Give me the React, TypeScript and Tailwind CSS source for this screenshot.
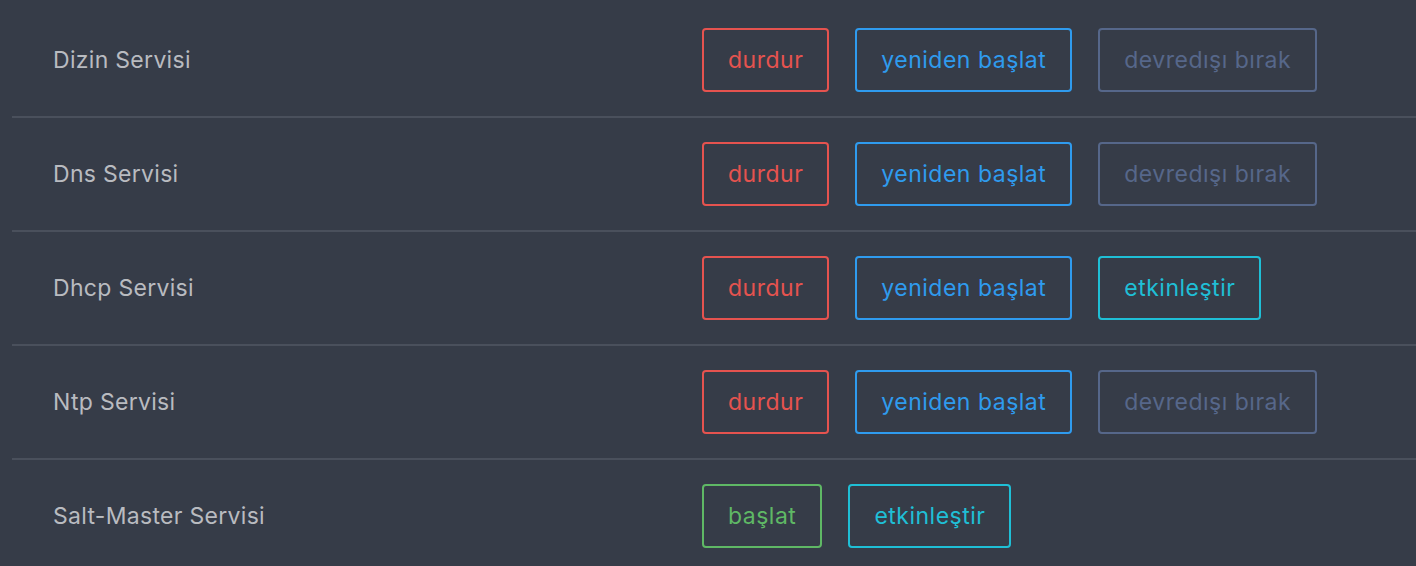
import React from "react";

type Btn = { label: string; cls: string };

const RED = "border-[#e5534f] text-[#e5534f]";
const BLUE = "border-[#2f9bee] text-[#2f9bee]";
const GREY = "border-[#56678a] text-[#56678a]";
const CYAN = "border-[#1fbfd6] text-[#1fbfd6]";
const GREEN = "border-[#5fb865] text-[#5fb865]";

const rows: { name: string; buttons: Btn[] }[] = [
  {
    name: "Dizin Servisi",
    buttons: [
      { label: "durdur", cls: RED },
      { label: "yeniden başlat", cls: BLUE },
      { label: "devredışı bırak", cls: GREY },
    ],
  },
  {
    name: "Dns Servisi",
    buttons: [
      { label: "durdur", cls: RED },
      { label: "yeniden başlat", cls: BLUE },
      { label: "devredışı bırak", cls: GREY },
    ],
  },
  {
    name: "Dhcp Servisi",
    buttons: [
      { label: "durdur", cls: RED },
      { label: "yeniden başlat", cls: BLUE },
      { label: "etkinleştir", cls: CYAN },
    ],
  },
  {
    name: "Ntp Servisi",
    buttons: [
      { label: "durdur", cls: RED },
      { label: "yeniden başlat", cls: BLUE },
      { label: "devredışı bırak", cls: GREY },
    ],
  },
  {
    name: "Salt-Master Servisi",
    buttons: [
      { label: "başlat", cls: GREEN },
      { label: "etkinleştir", cls: CYAN },
    ],
  },
];

export default function App() {
  return (
    <div
      className="w-[1416px] h-[566px] overflow-hidden bg-[#363c48]"
      style={{ fontFamily: "Inter, 'Noto Sans', sans-serif" }}
    >
      <div className="ml-[12px] pt-[4px]">
        {rows.map((r) => (
          <div
            key={r.name}
            className="flex items-center h-[114px] border-b-2 border-[#4a505c]"
          >
            <div className="w-[690px] pl-[41px] text-[23px] tracking-[0.3px] text-[#b9bbc0]">
              {r.name}
            </div>
            <div className="flex gap-[26px]">
              {r.buttons.map((b, i) => (
                <button
                  key={i}
                  className={`h-[64px] px-[24px] border-2 rounded-[4px] bg-transparent text-[23px] tracking-[0.5px] ${b.cls}`}
                >
                  {b.label}
                </button>
              ))}
            </div>
          </div>
        ))}
      </div>
    </div>
  );
}
